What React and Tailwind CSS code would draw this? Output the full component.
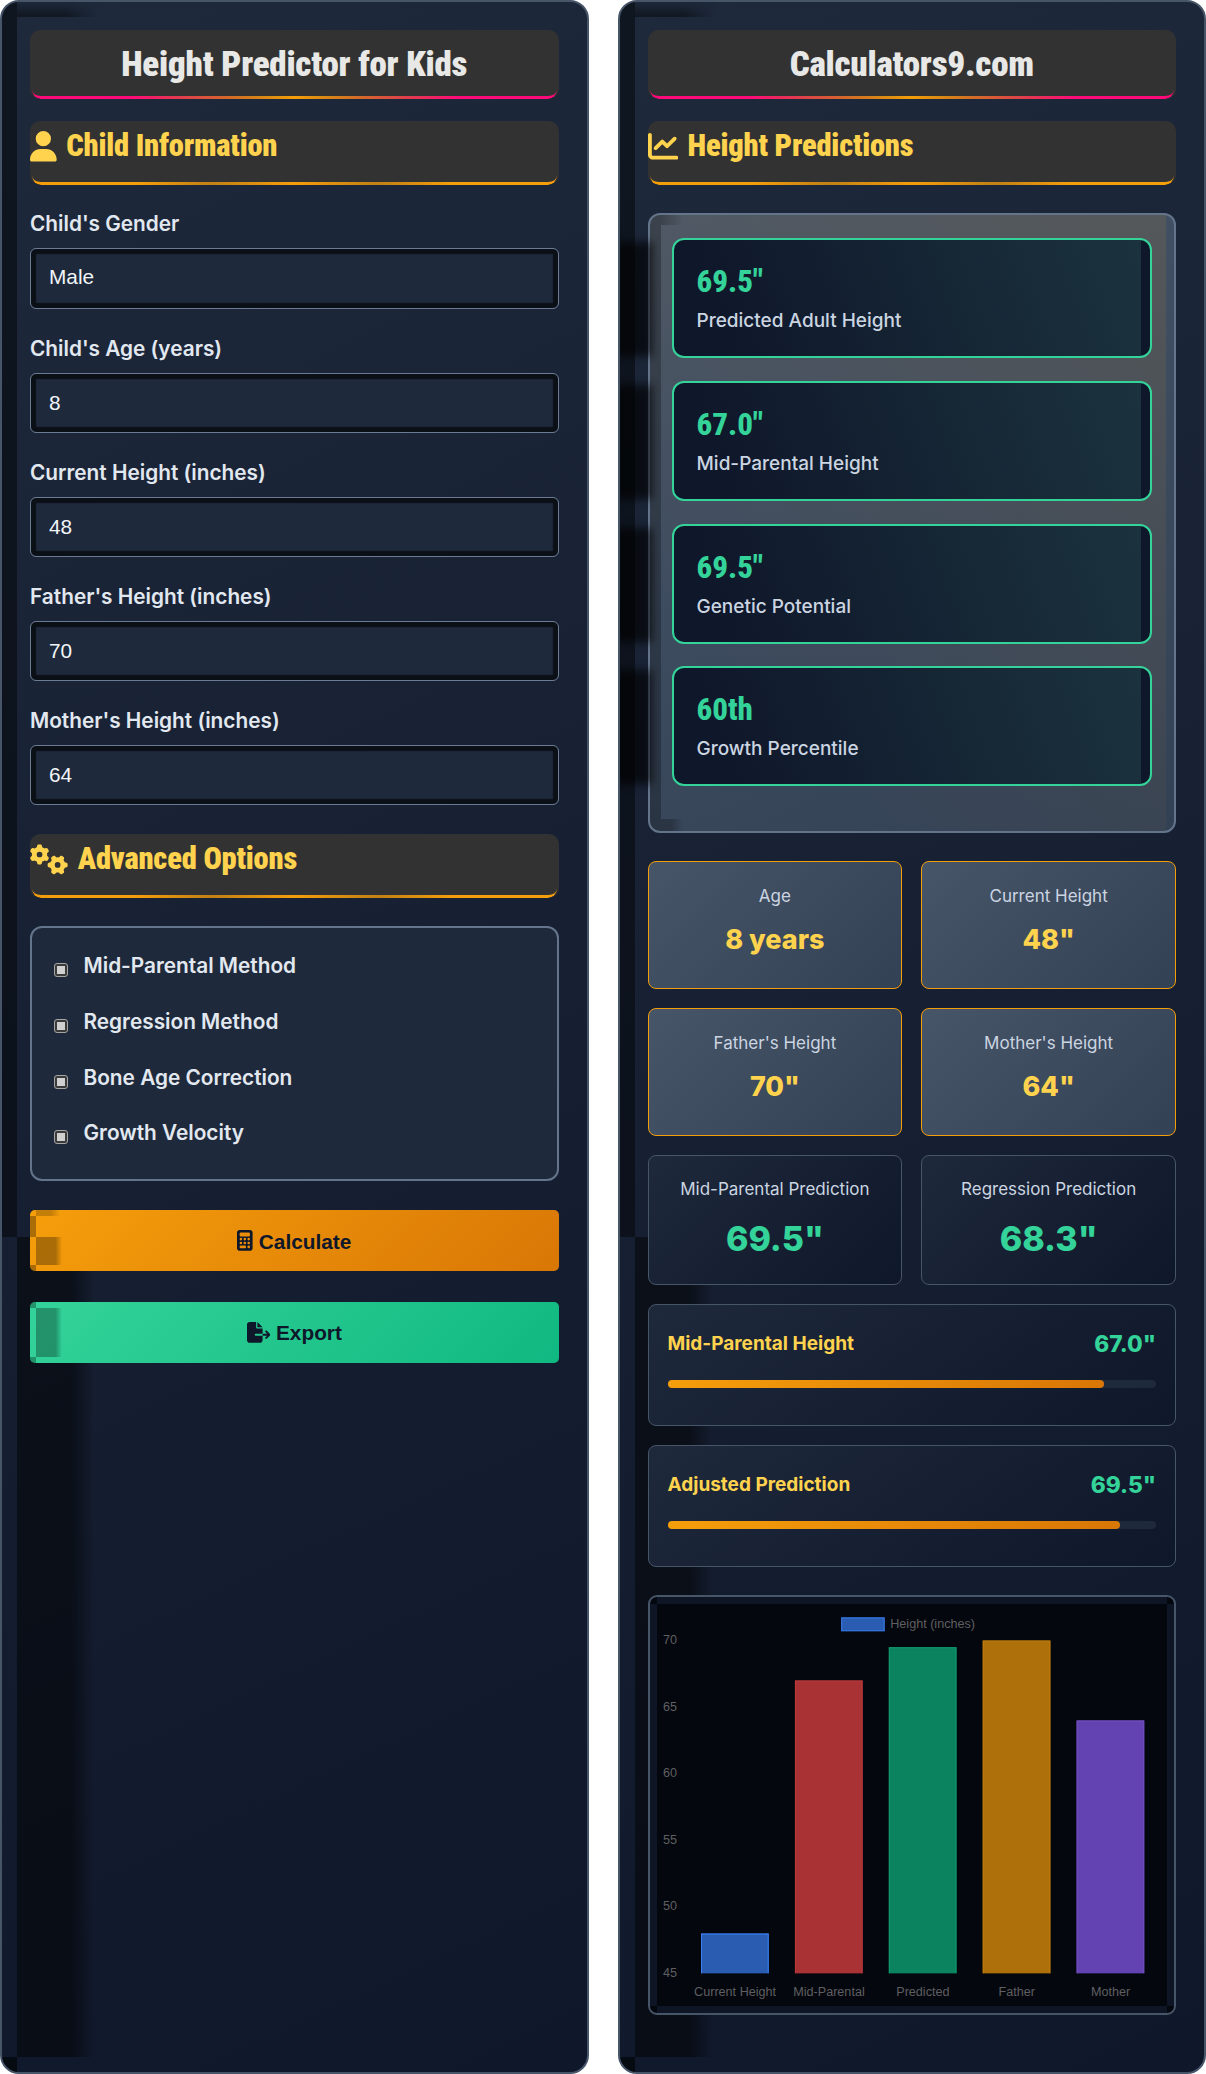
import { useState } from "react";
import { FaUser, FaGears, FaCalculator, FaFileExport, FaChartLine } from "react-icons/fa6";

const fields = [
  { label: "Child's Gender", value: "Male", box: "h-[61px] pb-[3px]" },
  { label: "Child's Age (years)", value: "8", box: "h-[60px]" },
  { label: "Current Height (inches)", value: "48", box: "h-[60px]" },
  { label: "Father's Height (inches)", value: "70", box: "h-[60px]" },
  { label: "Mother's Height (inches)", value: "64", box: "h-[60px]" },
];

const options = ["Mid-Parental Method", "Regression Method", "Bone Age Correction", "Growth Velocity"];

const predictions = [
  { value: '69.5"', label: "Predicted Adult Height" },
  { value: '67.0"', label: "Mid-Parental Height" },
  { value: '69.5"', label: "Genetic Potential" },
  { value: "60th", label: "Growth Percentile" },
];

const stats = [
  { label: "Age", value: "8 years" },
  { label: "Current Height", value: '48"' },
  { label: "Father's Height", value: '70"' },
  { label: "Mother's Height", value: '64"' },
];

const methods = [
  { label: "Mid-Parental Prediction", value: '69.5"' },
  { label: "Regression Prediction", value: '68.3"' },
];

const progress = [
  { label: "Mid-Parental Height", value: '67.0"', percent: 89.3 },
  { label: "Adjusted Prediction", value: '69.5"', percent: 92.7 },
];

const bars = [
  { label: "Current Height", value: 48, fill: "#2a5cb2", stroke: "#3b82f6" },
  { label: "Mid-Parental", value: 67, fill: "#a93235", stroke: "#b93a3c" },
  { label: "Predicted", value: 69.5, fill: "#0c835f", stroke: "#0f9a6e" },
  { label: "Father", value: 70, fill: "#ad700a", stroke: "#c17d0c" },
  { label: "Mother", value: 64, fill: "#6342b1", stroke: "#7350c0" },
];

// Dark inner shade that runs down the left edge of a panel
const PanelShade = () => (
  <div className="absolute inset-0 overflow-hidden rounded-[17px] pointer-events-none">
    <div className="absolute left-0 top-0 w-[15px] h-[1235px] bg-black/45" />
    <div className="absolute left-[15px] top-0 w-[80px] h-[15px] bg-linear-to-r from-black/40 from-60% to-transparent mask-t-from-10% mask-t-to-100%" />
    <div className="absolute left-[15px] top-[1235px] w-[78px] bottom-[15px] bg-linear-to-r from-black/50 from-70% to-transparent" />
    <div className="absolute left-0 bottom-0 w-[15px] h-[15px] bg-black/60" />
  </div>
);

const Panel = ({ children }) => (
  <section className="relative w-[588.5px] h-[2074px] rounded-[19px] border-2 border-[#475569] bg-linear-[155deg] from-[#1e293b] to-[#0f172a] px-[28px] pt-[28px]">
    <PanelShade />
    <div className="relative">{children}</div>
  </section>
);

const Title = ({ children }) => (
  <h1 className="relative h-[69px] rounded-[10px] overflow-hidden bg-[#323232] text-center font-[Roboto] font-stretch-condensed font-black text-[35px] leading-[69px] tracking-[-0.22px] text-[#e8e8e6]">
    {children}
    <span className="absolute inset-x-[2px] bottom-0 h-[9px] rounded-b-[9px] border-b-3 border-[#ff0a78] mask-[linear-gradient(90deg,#000_20%,#000a_35%,transparent_50%,#000a_65%,#000_80%)]" />
    <span className="absolute inset-x-[100px] bottom-0 h-[3px] bg-linear-to-r from-transparent via-[#f59e0b] to-transparent" />
  </h1>
);

const SectionTitle = ({ icon: Icon, iconWidth, children }) => (
  <h2 className="relative flex items-start gap-[9.5px] h-[64px] pt-[10px] rounded-[10px] overflow-hidden bg-[#323232] font-[Roboto] font-stretch-condensed font-black text-[30.5px] leading-[36px] tracking-[-0.2px] text-[#ffd34e]">
    <Icon className={`shrink-0 h-[1em] ${iconWidth}`} />
    <span className="-mt-[3px]">{children}</span>
    <span className="absolute inset-x-[2px] bottom-0 h-[9px] rounded-b-[9px] border-b-3 border-[#f59e0b] mask-[linear-gradient(90deg,#000_20%,#000b_34%,#000_50%,#000b_66%,#000_80%)]" />
  </h2>
);

const Field = ({ label, value, box }) => {
  const [text, setText] = useState(value);
  return (
    <div className="mb-[28px]">
      <label className="block text-[20.8px] font-semibold leading-[23px] mb-[13px] text-[#e2e8f0]">{label}</label>
      <input
        className={`block w-full ${box} rounded-[6px] border border-[#6b7b93] bg-[#1e293b] shadow-[inset_0_0_1px_5px_#0a1016] px-[18px] font-['Liberation_Sans'] text-[20.8px] text-[#f1f5f9] outline-none`}
        value={text}
        onChange={(e) => setText(e.target.value)}
      />
    </div>
  );
};

const HeightChart = () => {
  const yFor = (v) => 377.7 - (v - 45) * 13.3;
  return (
    <svg className="block w-full h-full" viewBox="0 0 528 419" fontFamily="Liberation Sans" fontSize="12.6" fill="#5f5f61">
      <rect x="193.5" y="22.5" width="42.5" height="13" fill="#2a5cb2" stroke="#3b82f6" />
      <text x="242" y="32.5">Height (inches)</text>
      {[45, 50, 55, 60, 65, 70].map((t) => (
        <text key={t} x="29" y={yFor(t) + 3.5} textAnchor="end">
          {t}
        </text>
      ))}
      {bars.map((b, i) => (
        <g key={b.label}>
          <rect x={53 + i * 93.8} y={yFor(b.value)} width="67.6" height={377.7 - yFor(b.value)} fill={b.fill} />
          <path
            d={`M${53.5 + i * 93.8} 377.7V${yFor(b.value) + 0.5}h66.6V377.7`}
            fill="none"
            stroke={b.stroke}
          />
          <text x={87 + i * 93.8} y="400" textAnchor="middle">
            {b.label}
          </text>
        </g>
      ))}
    </svg>
  );
};

function App() {
  return (
    <main className="flex justify-between w-[1206px] h-[2074px] bg-white font-[Inter,sans-serif]">
      <Panel>
        <Title>Height Predictor for Kids</Title>
        <div className="mt-[22px] mb-[27px]">
          <SectionTitle icon={FaUser} iconWidth="w-[0.875em]">Child Information</SectionTitle>
        </div>

        {fields.map((f) => (
          <Field key={f.label} {...f} />
        ))}

        <div className="mt-[29px]">
          <SectionTitle icon={FaGears} iconWidth="w-[1.25em]">Advanced Options</SectionTitle>
        </div>

        <div className="mt-[28px] h-[255px] rounded-[12px] border-2 border-[#64748b] bg-[#1e293b] px-[22px] pt-[26px]">
          {options.map((o) => (
            <label key={o} className="flex items-start h-[55.8px] text-[20.8px] leading-[24px] font-semibold text-[#e2e8f0]">
              <span className="mt-[9px] mr-[15.5px] size-[14px] rounded-[3px] border border-[#a5a5a5] bg-[#3b3b3b] p-[2px]">
                <span className="block size-full bg-[#d0d0d0]" />
              </span>
              {o}
            </label>
          ))}
        </div>

        <button className="relative mt-[29px] flex items-center justify-center gap-[6px] w-full h-[61px] rounded-[5px] overflow-hidden bg-linear-[135deg] from-[#f59e0b] to-[#d97706] font-['Liberation_Sans'] font-bold text-[20.8px] text-[#0f172a]">
          <FaCalculator className="w-[0.75em] h-[1em]" />
          <span className="pt-[2px]">Calculate</span>
          <span className="absolute left-0 top-[6px] w-[6px] h-[21px] bg-black/30" />
          <span className="absolute left-0 bottom-0 w-[6px] h-[6px] bg-black/30" />
          <span className="absolute left-[6px] top-0 w-[24px] h-[6px] bg-linear-to-r from-black/20 from-60% to-transparent" />
          <span className="absolute left-[6px] top-[27px] w-[26px] h-[28px] bg-linear-to-r from-black/30 from-75% to-transparent" />
        </button>

        <button className="relative mt-[31px] flex items-center justify-center gap-[6px] w-full h-[61px] rounded-[5px] overflow-hidden bg-linear-[135deg] from-[#34d399] to-[#10b981] font-['Liberation_Sans'] font-bold text-[20.8px] text-[#0f172a]">
          <FaFileExport className="w-[1.125em] h-[1em]" />
          <span className="pt-[1px]">Export</span>
          <span className="absolute left-0 top-0 w-[6px] h-[6px] bg-black/30" />
          <span className="absolute left-0 bottom-0 w-[6px] h-[6px] bg-black/30" />
          <span className="absolute left-[6px] top-[6px] w-[26px] h-[49px] bg-linear-to-r from-black/30 from-75% to-transparent" />
        </button>
      </Panel>

      <Panel>
        <Title>Calculators9.com</Title>
        <div className="mt-[22px] mb-[28px]">
          <SectionTitle icon={FaChartLine} iconWidth="w-[1em]">Height Predictions</SectionTitle>
        </div>

        <div className="relative h-[620px] rounded-[12px] border-2 border-[#64748b] bg-linear-[155deg] from-[#475569] to-[#334155] px-[22px] pt-[23px]">
          <div className="absolute left-0 top-0 bottom-0 right-[8px] rounded-l-[10px] bg-linear-[45deg] from-transparent from-20% to-[#f59e0b]/11" />
          <div className="absolute left-0 top-0 bottom-0 w-[11px] rounded-l-[10px] bg-black/25" />
          <div className="absolute left-[11px] top-0 w-[22px] h-[10px] bg-linear-to-r from-black/25 to-transparent" />
          <div className="absolute left-[11px] bottom-0 w-[22px] h-[12px] bg-linear-to-r from-black/25 from-50% to-transparent" />
          {predictions.map((p, i) => (
            <div key={i} className="relative h-[120px] mb-[22.8px] rounded-[12px] border-2 border-[#34d399] bg-[#0f172a] px-[23px] pt-[24px]">
              {/* card shadow, cut off at the panel edge */}
              <div className="absolute -left-[54px] -inset-y-[12px] w-[44px] overflow-hidden">
                <div className="-ml-[8px] mt-[14px] w-[40px] h-[114px] bg-black/65 blur-[4px]" />
              </div>
              <div className="absolute left-0 inset-y-0 right-[9px] rounded-l-[10px] bg-linear-[70deg] from-transparent from-10% to-[#5fd0b0]/15" />
              <p className="relative font-[Roboto] font-stretch-condensed font-extrabold text-[31px] leading-[36px] text-[#34d399]">{p.value}</p>
              <p className="relative mt-[9px] text-[19px] leading-[24px] font-medium text-[#cbd5e1]">{p.label}</p>
            </div>
          ))}
        </div>

        <div className="mt-[28px] grid grid-cols-2 gap-[19px]">
          {stats.map((s) => (
            <div key={s.label} className="h-[128px] rounded-[8px] border border-[#f59e0b] bg-linear-[135deg] from-[#475569] to-[#334155] pt-[21px] text-center">
              <p className="text-[17px] leading-[26px] text-[#cbd5e1]">{s.label}</p>
              <p className="mt-[14px] text-[27px] leading-[34px] font-extrabold text-[#ffd34e]">{s.value}</p>
            </div>
          ))}
          {methods.map((m) => (
            <div key={m.label} className="h-[130px] rounded-[8px] border border-[#475569] bg-linear-[135deg] from-[#1e293b] to-[#0f172a] pt-[20px] text-center">
              <p className="text-[17px] leading-[26px] text-[#cbd5e1]">{m.label}</p>
              <p className="mt-[15px] text-[34px] leading-[44px] font-extrabold text-[#34d399]">{m.value}</p>
            </div>
          ))}
        </div>

        {progress.map((p) => (
          <div key={p.label} className="mt-[19px] h-[122px] rounded-[8px] border border-[#475569] bg-linear-[145deg] from-[#1e293b] to-[#0f172a] px-[19px] pt-[23px]">
            <div className="flex items-center justify-between h-[32px]">
              <span className="text-[19px] font-bold text-[#ffd34e]">{p.label}</span>
              <span className="text-[22.7px] font-extrabold text-[#34d399]">{p.value}</span>
            </div>
            <div className="mt-[20px] h-[8px] rounded-full bg-[#1e293b]">
              <div className="h-full rounded-full bg-linear-to-r from-[#f59e0b] to-[#d97706]" style={{ width: `${p.percent}%` }} />
            </div>
          </div>
        ))}

        {/* chart frame: lighter edge strips with dark corners */}
        <div className="mt-[28px] relative h-[420px] rounded-[9px] border-2 border-[#475569] bg-[#04070e] overflow-hidden">
          <div className="absolute inset-x-[7px] inset-y-0 border-y-[7px] border-[#0e1626]" />
          <div className="absolute inset-x-0 inset-y-[7px] border-x-[7px] border-[#0e1626]" />
          <div className="absolute -inset-[2px]">
            <HeightChart />
          </div>
        </div>
      </Panel>
    </main>
  );
}

export default App;
